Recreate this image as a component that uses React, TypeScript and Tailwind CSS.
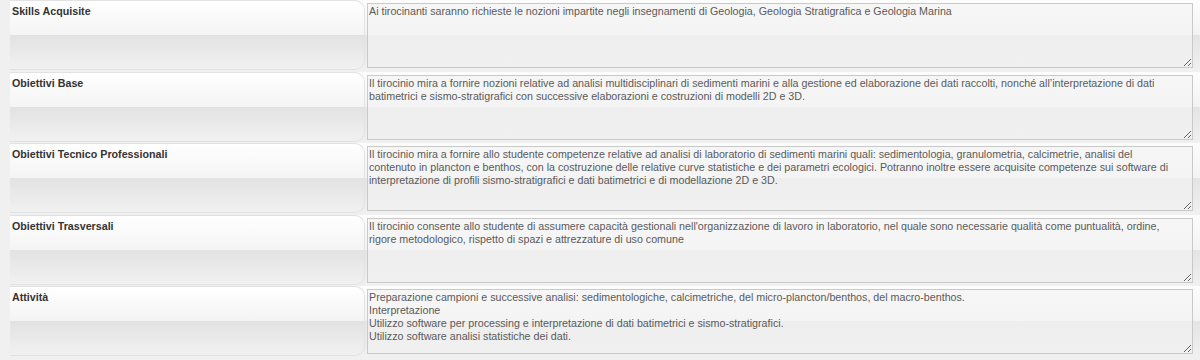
import React from 'react';

const rows: { label: string; text: string }[] = [
  {
    label: 'Skills Acquisite',
    text: 'Ai tirocinanti saranno richieste le nozioni impartite negli insegnamenti di Geologia, Geologia Stratigrafica e Geologia Marina',
  },
  {
    label: 'Obiettivi Base',
    text: 'Il tirocinio mira a fornire nozioni relative ad analisi multidisciplinari di sedimenti marini e alla gestione ed elaborazione dei dati raccolti, nonché all\u2019interpretazione di dati\nbatimetrici e sismo-stratigrafici con successive elaborazioni e costruzioni di modelli 2D e 3D.',
  },
  {
    label: 'Obiettivi Tecnico Professionali',
    text: 'Il tirocinio mira a fornire allo studente competenze relative ad analisi di laboratorio di sedimenti marini quali: sedimentologia, granulometria, calcimetrie, analisi del\ncontenuto in plancton e benthos, con la costruzione delle relative curve statistiche e dei parametri ecologici. Potranno inoltre essere acquisite competenze sui software di\ninterpretazione di profili sismo-stratigrafici e dati batimetrici e di modellazione 2D e 3D.',
  },
  {
    label: 'Obiettivi Trasversali',
    text: "Il tirocinio consente allo studente di assumere capacità gestionali nell'organizzazione di lavoro in laboratorio, nel quale sono necessarie qualità come puntualità, ordine,\nrigore metodologico, rispetto di spazi e attrezzature di uso comune",
  },
  {
    label: 'Attività',
    text: 'Preparazione campioni e successive analisi: sedimentologiche, calcimetriche, del micro-plancton/benthos, del macro-benthos.\nInterpretazione\nUtilizzo software per processing e interpretazione di dati batimetrici e sismo-stratigrafici.\nUtilizzo software analisi statistiche dei dati.',
  },
];

export default function App() {
  return (
    <div className="w-[1200px] h-[360px] overflow-hidden bg-[#f0f0f0] pl-[10px] font-['Liberation_Sans',Arial,sans-serif]">
      <div className="flex flex-col gap-[1.5px]">
        {rows.map((row) => (
          <div
            key={row.label}
            className="flex h-[70px] w-[1200px] bg-[linear-gradient(to_bottom,#fdfdfd_0%,#f3f3f3_50%,#e4e4e4_50%,#f0f0f0_100%)]"
          >
            {/* label cell */}
            <div className="w-[355px] shrink-0 rounded-r-[10px] border border-l-0 border-[#e2e2e2] bg-[linear-gradient(to_bottom,#ffffff_0%,#f4f4f4_50%,#e2e2e2_50%,#f1f1f1_100%)] pl-[2px] pt-[4px] text-[10.7px] font-bold text-[#333] leading-[13px]">
              {row.label}
            </div>
            <div className="pl-[2px] pt-[3px]">
              <textarea
                readOnly
                value={row.text}
                className="block w-[826px] h-[65px] border border-[#c9c9c9] bg-[linear-gradient(to_bottom,#f6f6f6_0%,#f4f4f4_50%,#eeeeee_50%,#f0f0f0_100%)] px-[1px] py-[1px] text-[10.7px] leading-[13px] text-[#5a5a5a] outline-none"
              />
            </div>
          </div>
        ))}
      </div>
    </div>
  );
}
